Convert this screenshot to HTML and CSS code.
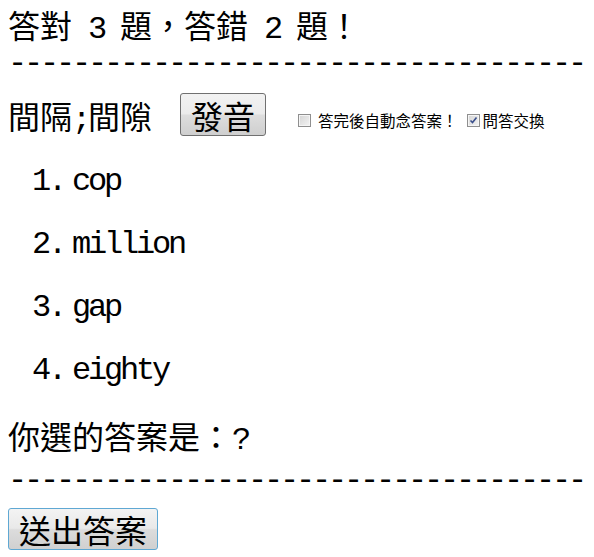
FILE: index.html
```html
<!DOCTYPE html>
<html lang="zh-Hant">
<head>
<meta charset="utf-8">
<title>測驗</title>
<link rel="stylesheet" href="styles.css">
</head>
<body>
<div class="score">答對<span class="en"> 3 </span>題，答錯<span class="en"> 2 </span>題！</div>
<div class="rule en">------------------------------------</div>
<div class="word">
  <span class="meaning">間隔<span class="en">;</span>間隙</span>
  <button class="btn speak" type="button">發音</button>
  <label class="opt opt-auto"><input type="checkbox" class="chk">答完後自動念答案！</label>
  <label class="opt opt-swap"><input type="checkbox" class="chk" checked>問答交換</label>
</div>
<ol class="choices en">
  <li>cop</li>
  <li>million</li>
  <li>gap</li>
  <li>eighty</li>
</ol>
<div class="answer">你選的答案是：<span class="en">?</span></div>
<div class="rule rule-bottom en">------------------------------------</div>
<button class="btn submit" type="button">送出答案</button>
</body>
</html>
```
FILE: styles.css
```css
body {
  margin: 8px;
  background: #fff;
  color: #000;
  font-family: "Noto Sans CJK TC", "Noto Sans CJK SC", sans-serif;
  font-size: 32px;
}

.en {
  font-family: "Liberation Mono", "DejaVu Sans Mono", monospace;
  font-size: 32px;
  letter-spacing: -3.2px;
}

.score .en,
.meaning .en,
.answer .en {
  line-height: 0;
}

.score {
  line-height: 32px;
  height: 32px;
  white-space: pre;
}

.rule {
  line-height: 48px;
  height: 48px;
  white-space: pre;
  overflow: hidden;
}

.rule-bottom {
  margin-top: 6px;
}

.word {
  display: flex;
  align-items: center;
  height: 43px;
  margin-top: 5px;
}

.meaning {
  line-height: 32px;
  white-space: pre;
}

.btn {
  font-family: "Noto Sans CJK TC", "Noto Sans CJK SC", sans-serif;
  font-size: 32px;
  line-height: 32px;
  color: #000;
  border: 1px solid #707070;
  border-radius: 3px;
  background: linear-gradient(#f2f2f2 0%, #ebebeb 48%, #dddddd 52%, #cfcfcf 100%);
  padding: 0 10px;
  margin: 0;
  box-sizing: border-box;
  height: 43px;
}

.speak {
  margin-left: 28px;
  width: 86px;
}

.opt {
  display: flex;
  align-items: center;
  font-size: 15.5px;
  line-height: 16px;
  margin-top: 11px;
  white-space: pre;
}

.opt-auto {
  margin-left: 32px;
}

.opt-swap {
  margin-left: 9px;
}

.chk {
  appearance: none;
  -webkit-appearance: none;
  width: 13px;
  height: 13px;
  margin: 0;
  box-sizing: border-box;
  border: 1px solid #8f8f8f;
  background: linear-gradient(135deg, #d4d4d4 0%, #f4f4f4 100%);
  box-shadow: inset 0 0 0 1px #f5f5f5;
}

.opt-auto .chk {
  margin-right: 7px;
}

.opt-swap .chk {
  margin-right: 3px;
}

.chk:checked {
  background: url("data:image/svg+xml,%3Csvg xmlns='http://www.w3.org/2000/svg' width='11' height='11' viewBox='0 0 11 11'%3E%3Cpath d='M2.5 5.5 L4.5 7.5 L8.5 2.5' fill='none' stroke='%233a4f8c' stroke-width='1.6'/%3E%3C/svg%3E") no-repeat center, linear-gradient(135deg, #d4d4d4 0%, #f4f4f4 100%);
}

.choices {
  list-style: none;
  counter-reset: q;
  margin: 14px 0 17px 24px;
  padding: 0;
}

.choices li {
  counter-increment: q;
  line-height: 63px;
  height: 63px;
  display: flex;
}

.choices li::before {
  content: counter(q) ".";
  width: 40px;
}

.answer {
  line-height: 32px;
  height: 32px;
}

.submit {
  width: 150px;
  height: 42px;
  margin-top: 3px;
  border-color: #5fa8d3;
  background: linear-gradient(#f3f3f3 0%, #e9e9e9 48%, #dcdcdc 52%, #d0d0d0 100%);
}
```
